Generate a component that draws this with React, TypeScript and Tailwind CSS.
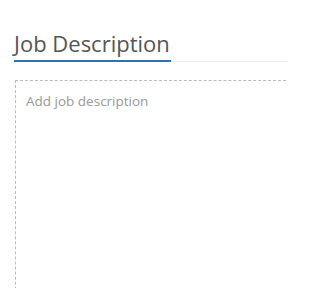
export default function App() {
  return (
    <div className="w-[288px] h-[288px] overflow-hidden bg-white pl-[14px] pt-[28px]" style={{ fontFamily: '"Open Sans", sans-serif' }}>
      <div className="flex items-end">
        <h2 className="text-[22px] leading-[30px] text-[#555] border-b-2 border-[#2c73b4] pb-[2px] pr-[1px] whitespace-nowrap">Job Description</h2>
        <div className="flex-1 border-b border-[#eaeaea] mb-[0px]" />
      </div>
      <div className="mt-[18px] ml-[1px] h-[240px] w-[276px] border border-dashed border-[#bbb] pl-[10px] pt-[11px]">
        <p className="text-[13.5px] leading-[18px] text-[#999]">Add job description</p>
      </div>
    </div>
  );
}
